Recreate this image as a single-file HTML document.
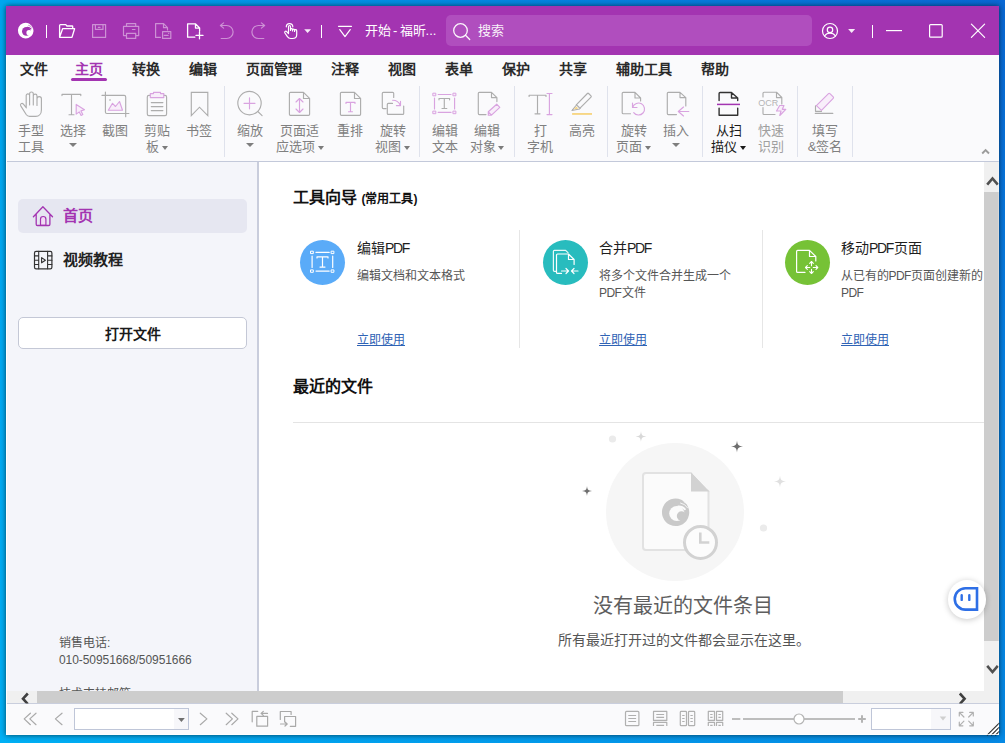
<!DOCTYPE html>
<html lang="zh-CN">
<head>
<meta charset="utf-8">
<title>开始 - 福昕高级PDF编辑器</title>
<style>
*{box-sizing:border-box;margin:0;padding:0}
html,body{width:1005px;height:743px;overflow:hidden}
body{position:relative;font-family:"Liberation Sans",sans-serif;font-size:13px;color:#222;
 background:linear-gradient(to bottom,rgba(0,180,255,0) 0%,rgba(0,176,255,.34) 50%,rgba(0,192,255,.38) 100%),linear-gradient(to right,#00a7ef 0%,#0a68d4 100%);}
.a{position:absolute;white-space:nowrap}
svg{position:absolute;overflow:visible}
#win{left:6px;top:6px;width:993px;height:729px;background:#fff;box-shadow:0 0 5px rgba(0,0,0,.55),0 1px 7px rgba(0,0,0,.12)}
#title{left:6px;top:6px;width:993px;height:49px;background:#a334b1}
#search{left:445.5px;top:15.3px;width:366.3px;height:31.2px;border-radius:5px;background:#b04ebe}
.vs{width:1px;background:#fff;top:25px;height:13px}
.tt{color:#fff;font-size:13px;line-height:17px}
#ribbon{left:6px;top:55px;width:993px;height:106px;background:#fafafc}
#ribline{left:6px;top:161px;width:993px;height:1px;background:#c3c9da}
.tab{top:59px;font-size:14px;line-height:20px;font-weight:bold;color:#2a2a2a}
.rl{width:90px;text-align:center;font-size:13px;line-height:16.5px;top:122.5px;color:#808080}
.rl.en{color:#1a1a1a}
.rl.dis{color:#a0a0a0}
.car{display:inline-block;width:0;height:0;border-left:3.5px solid transparent;border-right:3.5px solid transparent;border-top:4.5px solid #7b7b7b;vertical-align:middle;margin-left:1px;position:relative;top:0px;left:1.800px}
.en .car{border-top-color:#1a1a1a}
.car2{width:0;height:0;border-left:4px solid transparent;border-right:4px solid transparent;border-top:4.5px solid #7e7e7e;top:142.800px}
.sh1{position:relative;left:-1px}.sh2{position:relative;left:-1.5px}
.rs{top:86px;height:71px;width:1px;background:#dfe2ec}
#left{left:6px;top:162px;width:252px;height:529px;background:#f4f5fa}
#ldiv{left:257px;top:162px;width:2px;height:529px;background:#c9cddc}
#sel{left:18px;top:199px;width:229px;height:34px;border-radius:5px;background:#e6e7f1}
.nav{left:63px;font-size:15px;line-height:20px;font-weight:bold}
#openbtn{left:18px;top:317px;width:229px;height:32px;border:1px solid #c4c8d6;border-radius:5px;background:#fff;text-align:center;font-size:14px;line-height:32px;font-weight:bold;color:#1a1a1a}
.lt{left:59px;font-size:12px;line-height:16px;color:#555}
.h1{left:293px;font-size:16px;line-height:22px;font-weight:bold;color:#111}
.circ{width:45px;height:45px;border-radius:50%;top:239.800px}
.ct{top:238px;font-size:14px;line-height:20px;color:#1e1e1e}
.cd{top:267.5px;font-size:12px;line-height:17px;color:#555}
.cl{top:332px;font-size:12px;line-height:17px;color:#2f63b5;text-decoration:underline}
.ct b{font-weight:normal;letter-spacing:-1.3px;margin-right:1.3px}.cd b{font-weight:normal;letter-spacing:-.6px;margin-right:.6px}
.cdv{top:230px;height:118px;width:1px;background:#e6e6e6}
#hline{left:293px;top:422px;width:691px;height:1px;background:#e4e4e4}
#vsb{left:984px;top:162px;width:15px;height:529px;background:#f0f0f0}
#vth{left:984px;top:192px;width:15px;height:449px;background:#cdcdcd}
#hsb{left:6px;top:691px;width:993px;height:13px;background:#f0f0f0}
#hth{left:37px;top:691px;width:806px;height:13px;background:#cdcdcd}
#status{left:6px;top:703px;width:993px;height:32px;background:#fafafc;border-top:1px solid #c9cedd}
.combo{top:708px;height:22px;border:1px solid #bfc6d8;background:#fff}
.combo i{position:absolute;right:0;top:0;bottom:0;background:#f7f7fa}
</style>
</head>
<body>
<div class="a" id="win"></div>
<div class="a" id="title"></div>
<div class="a" id="search"></div>
<div class="a vs" style="left:46px"></div>
<div class="a vs" style="left:321px"></div>
<div class="a vs" style="left:872px"></div>
<div class="a tt" style="left:365px;top:22px;word-spacing:-1.5px">开始 - 福昕...</div>
<div class="a tt" style="left:478px;top:22px;opacity:.92">搜索</div>

<div class="a" id="ribbon"></div>
<div class="a" id="ribline"></div>
<div class="a tab" style="left:20px">文件</div>
<div class="a tab" style="left:75px;color:#a334b1">主页</div>
<div class="a" style="left:71px;top:78px;width:36px;height:3px;border-radius:2px;background:#a334b1"></div>
<div class="a tab" style="left:132px">转换</div>
<div class="a tab" style="left:189px">编辑</div>
<div class="a tab" style="left:246px">页面管理</div>
<div class="a tab" style="left:331px">注释</div>
<div class="a tab" style="left:388px">视图</div>
<div class="a tab" style="left:445px">表单</div>
<div class="a tab" style="left:502px">保护</div>
<div class="a tab" style="left:559px">共享</div>
<div class="a tab" style="left:616px">辅助工具</div>
<div class="a tab" style="left:701px">帮助</div>

<div class="a rl" style="left:-14px">手型<br>工具</div>
<div class="a rl" style="left:28px">选择</div><div class="a car2" style="left:68.700px"></div>
<div class="a rl" style="left:70px">截图</div>
<div class="a rl" style="left:112px">剪贴<br><span class="sh1">板<i class="car"></i></span></div>
<div class="a rl" style="left:154px">书签</div>
<div class="a rs" style="left:224px"></div>
<div class="a rl" style="left:205px">缩放</div><div class="a car2" style="left:245.800px"></div>
<div class="a rl" style="left:254px">页面适<br>应选项<i class="car"></i></div>
<div class="a rl" style="left:305px">重排</div>
<div class="a rl" style="left:348px">旋转<br><span class="sh2">视图<i class="car"></i></span></div>
<div class="a rs" style="left:419px"></div>
<div class="a rl" style="left:400px">编辑<br>文本</div>
<div class="a rl" style="left:442px">编辑<br><span class="sh1">对象<i class="car"></i></span></div>
<div class="a rs" style="left:514px"></div>
<div class="a rl" style="left:495px">打<br>字机</div>
<div class="a rl" style="left:537px">高亮</div>
<div class="a rs" style="left:607px"></div>
<div class="a rl" style="left:589px">旋转<br><span class="sh2">页面<i class="car"></i></span></div>
<div class="a rl" style="left:631px">插入</div><div class="a car2" style="left:672.300px"></div>
<div class="a rs" style="left:702px"></div>
<div class="a rl en" style="left:684px">从扫<br><span class="sh2">描仪<i class="car"></i></span></div>
<div class="a rl dis" style="left:726px">快速<br>识别</div>
<div class="a rs" style="left:797px"></div>
<div class="a rl" style="left:780px">填写<br>&amp;签名</div>
<div class="a rs" style="left:852px"></div>

<div class="a" id="left"></div>
<div class="a" id="ldiv"></div>
<div class="a" id="sel"></div>
<div class="a nav" style="top:206px;color:#a334b1">首页</div>
<div class="a nav" style="top:250px;color:#222">视频教程</div>
<div class="a" id="openbtn">打开文件</div>
<div class="a lt" style="top:635px">销售电话:</div>
<div class="a lt" style="top:652px;letter-spacing:-.07px">010-50951668/50951666</div>
<div class="a lt" style="top:686px;height:5px;overflow:hidden">技术支持邮箱:</div>

<div class="a h1" style="top:187px">工具向导 <span style="font-size:12px;position:relative;top:0px;left:0px">(常用工具)</span></div>
<div class="a circ" style="left:300px;background:#5aabf8"></div>
<div class="a ct" style="left:357px">编辑<b>PDF</b></div>
<div class="a cd" style="left:357px">编辑文档和文本格式</div>
<div class="a cl" style="left:357px">立即使用</div>
<div class="a cdv" style="left:519px"></div>
<div class="a circ" style="left:543px;background:#28bcbe"></div>
<div class="a ct" style="left:599px">合并<b>PDF</b></div>
<div class="a cd" style="left:599px">将多个文件合并生成一个<br><b>PDF</b>文件</div>
<div class="a cl" style="left:599px">立即使用</div>
<div class="a cdv" style="left:762px"></div>
<div class="a circ" style="left:785px;background:#76c236"></div>
<div class="a ct" style="left:841px">移动<b>PDF</b>页面</div>
<div class="a cd" style="left:841px;letter-spacing:-.12px">从已有的<b>PDF</b>页面创建新的<br><b>PDF</b></div>
<div class="a cl" style="left:841px">立即使用</div>
<div class="a h1" style="top:375.5px">最近的文件</div>
<div class="a" id="hline"></div>

<div class="a" style="left:606px;top:443px;width:138px;height:138px;border-radius:50%;background:#f6f6f6"></div>
<div class="a" style="left:483px;top:592px;width:400px;text-align:center;font-size:20px;line-height:28px;color:#5e5e5e">没有最近的文件条目</div>
<div class="a" style="left:484px;top:630px;width:400px;text-align:center;font-size:14px;line-height:20px;color:#555">所有最近打开过的文件都会显示在这里。</div>

<div class="a" id="vsb"></div>
<div class="a" id="vth"></div>
<div class="a" id="hsb"></div>
<div class="a" id="hth"></div>
<div class="a" id="status"></div>
<div class="a combo" style="left:74px;width:115px"><i style="width:14px"></i></div>
<div class="a combo" style="left:871px;width:80px"><i style="width:19px"></i></div>
<svg width="1005" height="743" viewBox="0 0 1005 743" style="left:0;top:0" fill="none" stroke-linecap="round" stroke-linejoin="round">
<!-- ===== title bar ===== -->
<g id="logo" stroke="none">
<ellipse cx="25.7" cy="30.6" rx="7.8" ry="7.9" fill="#fff" transform="rotate(-20 25.7 30.6)"/>
<circle cx="26.4" cy="31.300" r="4.400" fill="#a334b1"/>
<circle cx="29.1" cy="32.7" r="2.7" fill="#fff"/>
<path d="M27.3 27.3q2.300-.100 3.600 1.500" stroke="#a334b1" stroke-width="1.300" fill="none"/>
<path d="M28.600 25.300q2.600.500 4 2.700M30.500 24.500q2 1 2.800 2.600" stroke="#a334b1" stroke-width=".550" fill="none"/>
</g>
<g stroke="#fff" stroke-width="1.3">
<path d="M59.6 37.3V25.6q0-.9.9-.9h5.3l1.1 1.3h5.3q.5 0 .5.6v1.9M59.6 37.3l3-8.6h12l-2.6 8.6z"/>
<path d="M187.6 23.9h8l4 4.1v3M195.5 24v4.1h4M187.6 23.9v13.3h7.2M196 35.4h7M199.5 32v6.8"/>
<path d="M288.5 33V26.5a1 1 0 0 1 2 0v4M290.5 29.6a1 1 0 0 1 2 .2v1.2M292.5 30a1 1 0 0 1 2 .2v1.2M294.5 30.6a1.1 1.1 0 0 1 2.2.3v3.8c0 2.400-2 3.800-4.300 3.800h-1.700c-1.400 0-2.500-.600-3.300-1.800l-2.500-3.700c-.8-1.300.8-2.500 1.800-1.400l1.800 2" stroke-width="1.2"/>
<path d="M286.300 26.800a3.250 3.250 0 0 1 6.500 0" stroke-width="1.2"/>
<path d="M338.500 26.300h13M339.800 29.600l5.200 7 5.200-7" stroke-width="1.2"/>
<circle cx="460.500" cy="30.500" r="6.800" stroke-width="1.300" stroke-opacity=".95"/>
<path d="M465.500 35.300l4.200 4.200" stroke-opacity=".95"/>
<circle cx="830" cy="31" r="7.500" stroke-width="1.200"/>
<circle cx="830" cy="29.900" r="2.700" stroke-width="1.200"/>
<path d="M824.600 35.800c1.200-1.700 2.800-2.700 5.400-2.700s4.200 1 5.400 2.700" stroke-width="1.200"/>
<path d="M886 30.600h16" stroke-width="1.200" stroke-linecap="butt"/>
<rect x="929.600" y="24.600" width="12.600" height="12.600" rx="1" stroke-width="1.200"/>
<path d="M971.400 24.200l13.200 13.200M984.600 24.200l-13.200 13.200" stroke-width="1.200"/>
</g>
<g fill="#fff" stroke="none" fill-opacity=".9">
<path d="M304.200 29.300h6.800l-3.400 3.800z"/>
<path d="M848.100 29.100h7l-3.500 3.900z"/>
</g>
<g stroke="#fff" stroke-opacity=".46" stroke-width="1.200">
<path d="M92.600 24.600h13v12.800h-13zM95.400 24.600v4.800h7.600v-4.800M98.300 27.300h1.800"/>
<path d="M126.500 26.400v-2.800h9.200v2.800M126.500 35.600h-3v-9.200h15.200v9.200h-3M126.500 33.300h9.200v5.100h-9.200zM132.400 29.500h2.600"/>
<path d="M160.400 37.400h-4.800v-13.800h8l3.900 4v2.300M163.500 23.700v4h3.900M162.600 31.600h8.200v6.800h-8.200zM164.300 35.400h3.800M168.600 33.300h.2"/>
<path d="M223.600 22.900l-3.200 2.600 3.200 2.600M220.600 25.500h6a6.500 6.500 0 0 1 0 13h-5.400"/>
<path d="M261.400 22.900l3.200 2.600-3.200 2.600M264.400 25.500h-6a6.500 6.500 0 0 0 0 13h5.400"/>
</g>
<!-- ===== ribbon icons ===== -->
<g stroke="#adadad" stroke-width="1.150">
<path d="M26.200 107V95.600a1.700 1.700 0 0 1 3.400 0V105M29.600 95.500v-1.700a1.850 1.850 0 0 1 3.700 0V105M33.300 96a1.850 1.850 0 0 1 3.700 0v9.500M37 98.800a2.200 2.200 0 0 1 4.400 0v11.200c0 4-2.500 6.400-5.600 6.400h-6.200c-1.500 0-2.600-.7-3.400-1.900l-5.300-8.400c-1.300-2.200 1-3.700 2.500-2l3 3.700"/>
<path d="M62 95.600v-1.200h18.800v1.200M71.500 94.400v20.300M69 114.700h5"/>
<path d="M102 95.400h22.200q1.500 0 1.500 1.500v19.800M105.400 92v20q0 1.500 1.500 1.500h22"/>
<rect x="109.300" y="99.300" width="1.400" height="1.400" fill="#adadad" stroke="none"/>
<rect x="147.300" y="95.400" width="19.300" height="20.200" rx="1.600"/>
<path d="M151.300 102.600h11.600M151.300 106.600h11.600M151.300 110.600h11.600"/>
<path d="M191.300 92.300h16.500v23.300l-8.300-8.400-8.200 8.400z" stroke-linejoin="miter"/>
<circle cx="249.500" cy="103.100" r="11.700"/>
<path d="M257.800 111.500l4.300 4.100"/>
<path d="M303.500 92.300h-13.100q-1 0-1 1v21q0 1 1 1h18.200q1 0 1-1V98.400zM303.500 92.400v6.100h6"/>
<path d="M354.500 92.300h-13.100q-1 0-1 1v21q0 1 1 1h18.200q1 0 1-1V98.400zM354.500 92.400v6.100h6"/>
<path d="M386 108.600h-2.700q-1 0-1-1V93.300q0-1 1-1h9.400q1 0 1 1v4.200M392.500 103.400h-4.200q-1 0-1 1v9q0 1 1 1h14.400q1 0 1-1V106"/>
<path d="M439 99.800v-1.300h10.600v1.300M444.300 98.500v10M442 108.500h4.800"/>
<path d="M486 114.600h-6.700q-1 0-1-1V93.300q0-1 1-1h12.200l5.400 5.300v4M491.500 92.400v5.200h5.300"/>
<path d="M529.100 96.500v-1.300h16.900v1.300M537.500 95.200v18.600M535 113.800h5"/>
<path d="M577 104.200l10.400-10.700q.6-.6 1.200 0l2.400 2.400q.6.600 0 1.200l-10.500 10.600M576.300 104.600l3.900 3.900M576 105.500l-4 5 7.500-1.500"/>
<path d="M630.500 113.700h-7.300q-1 0-1-1V93.300q0-1 1-1h11.800l5.600 5.700v3M635 92.400v5.600h5.600"/>
<path d="M676.500 114.600h-8.200q-1 0-1-1V93.300q0-1 1-1h11.700l5.800 5.300v8.400M680 92.400v5.200h5.800"/>
<path d="M763 97v-3.800q0-1 1-1h12.500l5.300 5.300v6.500M776.500 92.400v5.200h5.300M763 107.500v6q0 1 1 1h11"/>
<path d="M815.500 105.800v5.500h6M815.300 113.400h17.500"/>
</g>
<text x="758.300" y="106.200" font-family="Liberation Sans, sans-serif" font-size="9.800" fill="#b4b4b4" stroke="none" textLength="20" lengthAdjust="spacingAndGlyphs">OCR</text>
<g stroke="#d9a3e0" stroke-width="1.150" fill="#f8eefa">
<path d="M76.200 104.400l8.300 5.300-3.500 1.200 1.800 3.600-1.700.9-1.800-3.500-3.100 2.200z"/>
<path d="M108.300 110.200l4.200-6.900 3 3.200 4-5 3 8.700z"/>
<path d="M150.300 97.600v-4h3.200v-1.200h7v1.200h3.300v4z"/>
<path d="M244 103.300h11M249.500 97.800v11" fill="none"/>
<path d="M299.500 98.600v13.900M296 102l3.500-3.500L303 102M296 109l3.500 3.500L303 109" fill="none"/>
<path d="M346 103.500v-1.200h9v1.200M350.500 102.300v9.300M348.500 111.700h4" fill="none"/>
<path d="M392.600 100.200c4 0 6.600 2 7.700 5.300M396.400 105.600h4.100v-4.200" fill="none"/>
<path d="M438.200 94.500h12.800M438.200 112.400h12.800M434.500 98v11M454.600 98v11" fill="none"/>
<path d="M433.200 93.200h2.600v2.600h-2.600zM453.300 93.200h2.600v2.600h-2.600zM433.200 111.100h2.600v2.600h-2.600zM453.300 111.100h2.600v2.600h-2.600z" stroke-width="1"/>
<path d="M488.300 111.800l8.400-7.600 3.100 3.100-8.300 7.900h-3.200zM488.300 111.800l3.200 3.400"/>
<path d="M549.400 93.500v21.100M547 93.500h5M547 114.600h5" fill="none"/>
<path d="M632.500 103v4.500h4.500M632.800 107.200a6 6 0 1 1 .9 5.400" fill="none"/>
<path d="M688.800 111.500h-10.300M683.500 107l-5.200 4.500 5.200 4.500" fill="none"/>
<path d="M779.700 105.500h4.300l-1.700 3.800h3.500l-6 6.200 1.200-4.500h-4.500z"/>
<path d="M816.400 105.600l12.100-12q.7-.7 1.400 0l3.300 3.300q.7.700 0 1.400l-11.700 12z"/>
</g>
<rect x="572.100" y="113" width="19.900" height="1.900" fill="#f7d685" stroke="none"/>
<path d="M573.500 109.500l2.800-3 2 2z" fill="#f7d685" stroke="none"/>
<!-- scanner (enabled) -->
<path d="M719.100 100.500v-7q0-1 1-1h11.400l6.200 5.500v2.500M731.500 92.600v5.400h6.200M719.100 108.100v7.200h18.600v-7.200" stroke="#333" stroke-width="1.400"/>
<path d="M717 104.400h23" stroke="#a334b1" stroke-width="1.500" stroke-linecap="butt"/>
<path d="M982.200 153.500l3.400-3.500 3.400 3.500" stroke="#9c9c9c" stroke-width="1.900" stroke-linecap="butt" stroke-linejoin="miter"/>
</svg>

<svg width="1005" height="743" viewBox="0 0 1005 743" style="left:0;top:0" fill="none" stroke-linecap="round" stroke-linejoin="round">
<!-- nav icons -->
<path d="M40.500 225.400v-6.200a2.700 2.700 0 0 1 5.400 0v6.200z" fill="#f1dcf4" stroke="#a334b1" stroke-width="1.200"/>
<path d="M33.400 216.800l9.500-10.100 9.600 10.100M36.200 214v10.300q0 1.200 1.200 1.200h11.300q1.200 0 1.200-1.200V214" stroke="#a334b1" stroke-width="1.300"/>
<g stroke="#333" stroke-width="1.200">
<rect x="34.500" y="251.400" width="17.400" height="17.400" rx="1.600"/>
<path d="M38.700 251.400v17.400M47.600 251.400v17.400M34.500 255.900h4.200M34.500 260.200h4.200M34.500 264.500h4.200M47.600 255.900h4.300M47.600 260.200h4.300M47.600 264.500h4.300M41.600 257.600l3.800 2.600-3.800 2.600z" stroke-width="1.100"/>
</g>
<!-- card icons -->
<g stroke="#fff" stroke-width="1.200">
<path d="M316 252.400h13.200M316 271.100h13.200M312.100 256v11.500M332.700 256v11.500"/>
<path d="M310.900 251.200h2.400v2.400h-2.400zM331.500 251.200h2.400v2.400h-2.400zM310.900 269.900h2.400v2.400h-2.400zM331.500 269.900h2.400v2.400h-2.400z" stroke-width="1"/>
<path d="M317 258v-1.200h11v1.200M322.500 256.800v10.300M320 267.100h5"/>
<path d="M556 271.300h-1.600q-1 0-1-1V251.300q0-1 1-1h11.200l2.400 2.400" stroke-opacity=".9"/>
<path d="M561.500 273.400h-4q-1 0-1-1V255q0-1 1-1h11l5.600 5.500v5M568.500 254.100v5.400h5.600"/>
<path d="M561.500 271h6.500M566 268.500l2.500 2.500-2.500 2.500M578 271h-6.500M574 268.500l-2.500 2.500 2.500 2.500"/>
<path d="M805 272.400h-7.400q-1 0-1-1V251.400q0-1 1-1h11.900l6.300 6.100v4.500M809.500 250.500v6h6.300"/>
<path d="M805.500 267.500h4.300M813.300 267.500h4.500M811.500 261.500v4.300M811.500 269.300v4.200M807.300 265.700l-1.800 1.800 1.800 1.800M816 265.700l1.800 1.800-1.800 1.800M809.700 263.300l1.800-1.800 1.800 1.800M809.700 271.700l1.800 1.800 1.800-1.800" stroke-width="1.100"/>
</g>
<!-- empty state -->
<rect x="643" y="473" width="65.500" height="77" rx="3" fill="#fbfbfb" stroke="#e2e2e2" stroke-width="2"/>
<path d="M691 472v19.500h18.500z" fill="#d2d2d2" stroke="none"/>
<path d="M691 470h20v21h-1.500L691 472z" fill="#f6f6f6" stroke="none"/>
<g stroke="none">
<ellipse cx="675.6" cy="512.3" rx="13.6" ry="13.8" fill="#c9c9c9" transform="rotate(-20 675.6 512.3)"/>
<circle cx="676.800" cy="513.500" r="7.600" fill="#fbfbfb"/>
<circle cx="681.500" cy="516" r="4.700" fill="#c9c9c9"/>
<path d="M678.400 506.500q4-.200 6.300 2.600" stroke="#fbfbfb" stroke-width="2.200" fill="none"/>
<path d="M680.600 503q4.600.900 7 4.800M684 501.700q3.400 1.700 4.900 4.500" stroke="#fbfbfb" stroke-width=".9" fill="none"/>
</g>
<circle cx="700.500" cy="542.400" r="16" fill="#fcfcfc" stroke="#d2d2d2" stroke-width="3"/>
<path d="M700.300 532.500v10h9" stroke="#d2d2d2" stroke-width="2.600" stroke-linecap="butt" stroke-linejoin="miter"/>
<circle cx="612.500" cy="439" r="3.600" fill="#ebebeb"/>
<circle cx="763.500" cy="528" r="3.600" fill="#ebebeb"/>
<path transform="translate(737 446.5)" d="M0 -6C0.42000000000000004 -1.5 1.5 -0.42000000000000004 6 0C1.5 0.42000000000000004 0.42000000000000004 1.5 0 6C-0.42000000000000004 1.5 -1.5 0.42000000000000004 -6 0C-1.5 -0.42000000000000004 -0.42000000000000004 -1.5 0 -6z" fill="#6e6e6e" stroke="none"/>
<path transform="translate(587 491)" d="M0 -5C0.35000000000000003 -1.25 1.25 -0.35000000000000003 5 0C1.25 0.35000000000000003 0.35000000000000003 1.25 0 5C-0.35000000000000003 1.25 -1.25 0.35000000000000003 -5 0C-1.25 -0.35000000000000003 -0.35000000000000003 -1.25 0 -5z" fill="#6e6e6e" stroke="none"/>
<path transform="translate(641 436.5)" d="M0 -5.5C0.385 -1.375 1.375 -0.385 5.5 0C1.375 0.385 0.385 1.375 0 5.5C-0.385 1.375 -1.375 0.385 -5.5 0C-1.375 -0.385 -0.385 -1.375 0 -5.5z" fill="#d8d8d8" stroke="none"/>
<path transform="translate(780 481.5)" d="M0 -6C0.42000000000000004 -1.5 1.5 -0.42000000000000004 6 0C1.5 0.42000000000000004 0.42000000000000004 1.5 0 6C-0.42000000000000004 1.5 -1.5 0.42000000000000004 -6 0C-1.5 -0.42000000000000004 -0.42000000000000004 -1.5 0 -6z" fill="#e0e0e0" stroke="none"/>
<!-- scrollbar arrows -->
<g stroke="#505050" stroke-width="2.600" stroke-linecap="butt" stroke-linejoin="miter">
<path d="M987.200 184.700l5.300-6.300 5.300 6.300"/>
<path d="M987.200 665.800l5.300 6.300 5.300-6.300"/>
</g>
<clipPath id="hc"><rect x="0" y="690" width="1005" height="13.400"/></clipPath>
<g stroke="#404040" stroke-width="2.600" stroke-linecap="butt" stroke-linejoin="miter" clip-path="url(#hc)">
<path d="M27.800 693.500l-4.800 5.200 4.800 5.300"/>
<path d="M959.800 693.500l4.800 5.200-4.800 5.300"/>
</g>
<!-- status bar icons -->
<g stroke="#a9a9a9" stroke-width="1.200">
<path d="M30.400 713.200l-6.200 5.700 6.200 5.800M36 713.200l-6.200 5.700 6.200 5.800M62 713.200l-6.600 5.700 6.600 5.800M200.300 713.200l6.600 5.700-6.600 5.800M226.200 713.200l6.200 5.700-6.200 5.800M231.800 713.200l6.200 5.700-6.200 5.800"/>
<path d="M252.200 721.800v-10.400h5.500M256.800 716.400h10.800v9.800h-10.800zM267.500 713.400h-6.200M263.300 711.400l-2.200 2 2.200 2"/>
<path d="M284.600 722v-5.500h11v9.800h-5.300M280.300 719.500v-8h10.800v3M280.500 724h6.500M285 722l2.200 2-2.200 2"/>
</g>
<g stroke="#b0b0b0" stroke-width="1.200">
<rect x="625.500" y="711.400" width="13.400" height="14.300" rx="1"/>
<path d="M628.300 715.500h7.800M628.300 718.500h7.800M628.300 721.500h7.800" stroke-linecap="butt"/>
<path d="M653.500 711.400h13.300v9h-13.300zM656.300 714.500h7.800M656.300 717.400h7.800M653.500 726v-3.600h13.300v3.600M656.300 725.400h7.800" stroke-linecap="butt"/>
<rect x="680.300" y="711.400" width="6.200" height="14.300" rx=".8"/><rect x="688.500" y="711.400" width="6.200" height="14.300" rx=".8"/>
<path d="M682.200 715.500h2.400M682.200 718.500h2.400M682.200 721.500h2.400M690.400 715.500h2.400M690.400 718.500h2.400M690.400 721.500h2.400" stroke-linecap="butt"/>
<path d="M708.300 711.400h6.200v9h-6.200zM716.500 711.400h6.200v9h-6.200zM710.200 714.500h2.400M710.200 717.400h2.400M718.400 714.500h2.400M718.400 717.400h2.400M708.300 726v-3.600h6.200v3.600M716.500 726v-3.600h6.200v3.600M710.200 725.400h2.400M718.400 725.400h2.400" stroke-linecap="butt"/>
</g>
<path d="M732 719h8.300M743 719h112" stroke="#bdbdbd" stroke-width="2" stroke-linecap="butt"/>
<path d="M858.200 719h7.600M862 715.200v7.600" stroke="#b4b4b4" stroke-width="2" stroke-linecap="butt"/>
<circle cx="799" cy="719" r="5" fill="#fff" stroke="#b4b4b4" stroke-width="1.200"/>
<path d="M178 718h6.800l-3.400 4z" fill="#6f6f6f" stroke="none"/>
<path d="M939.700 716.600h6.600l-3.300 3.800z" fill="#cfcfcf" stroke="none"/>
<g stroke="#b0b0b0" stroke-width="1.200">
<path d="M959.300 712.400l4.600 4.600M959.300 716v-3.600h3.600M973.300 712.400l-4.600 4.600M969.700 712.400h3.600v3.600M959.300 725.800l4.600-4.600M959.300 722.200v3.600h3.600M973.300 725.800l-4.600-4.600M973.300 722.200v3.600h-3.600"/>
</g>
<!-- resize grip -->
<path d="M986 735l13-13v13z" fill="#fff" stroke="none"/><path d="M987 735.300l12.300-12.300M991.200 735.300l8.100-8.100M995.300 735.300l4-4" stroke="#1a1a1a" stroke-width="1.150" stroke-linecap="butt" stroke-dasharray="1.200 .220"/>
</svg>
<div class="a" style="left:6px;top:55px;width:993px;height:680px;border-left:1px solid #fff;border-bottom:1px solid rgba(255,255,255,.8);border-right:1px solid rgba(255,255,255,.22)"></div>
<!-- chat bubble -->
<div class="a" style="left:947.500px;top:580px;width:38.500px;height:38.500px;border-radius:50%;background:#fff;box-shadow:0 1px 6px rgba(0,0,0,.22)"></div>
<svg width="40" height="40" viewBox="946 579 40 40" style="left:946px;top:579px" fill="none">
<path d="M977 588.300v21.300h-11.600a10.650 10.650 0 0 1 0-21.300z" stroke="#2e6fe6" stroke-width="2.600" stroke-linejoin="miter"/>
<path d="M961.700 595.300v4.600M969.300 595.300v4.600" stroke="#2e6fe6" stroke-width="2.400" stroke-linecap="round"/>
</svg>

</body>
</html>
